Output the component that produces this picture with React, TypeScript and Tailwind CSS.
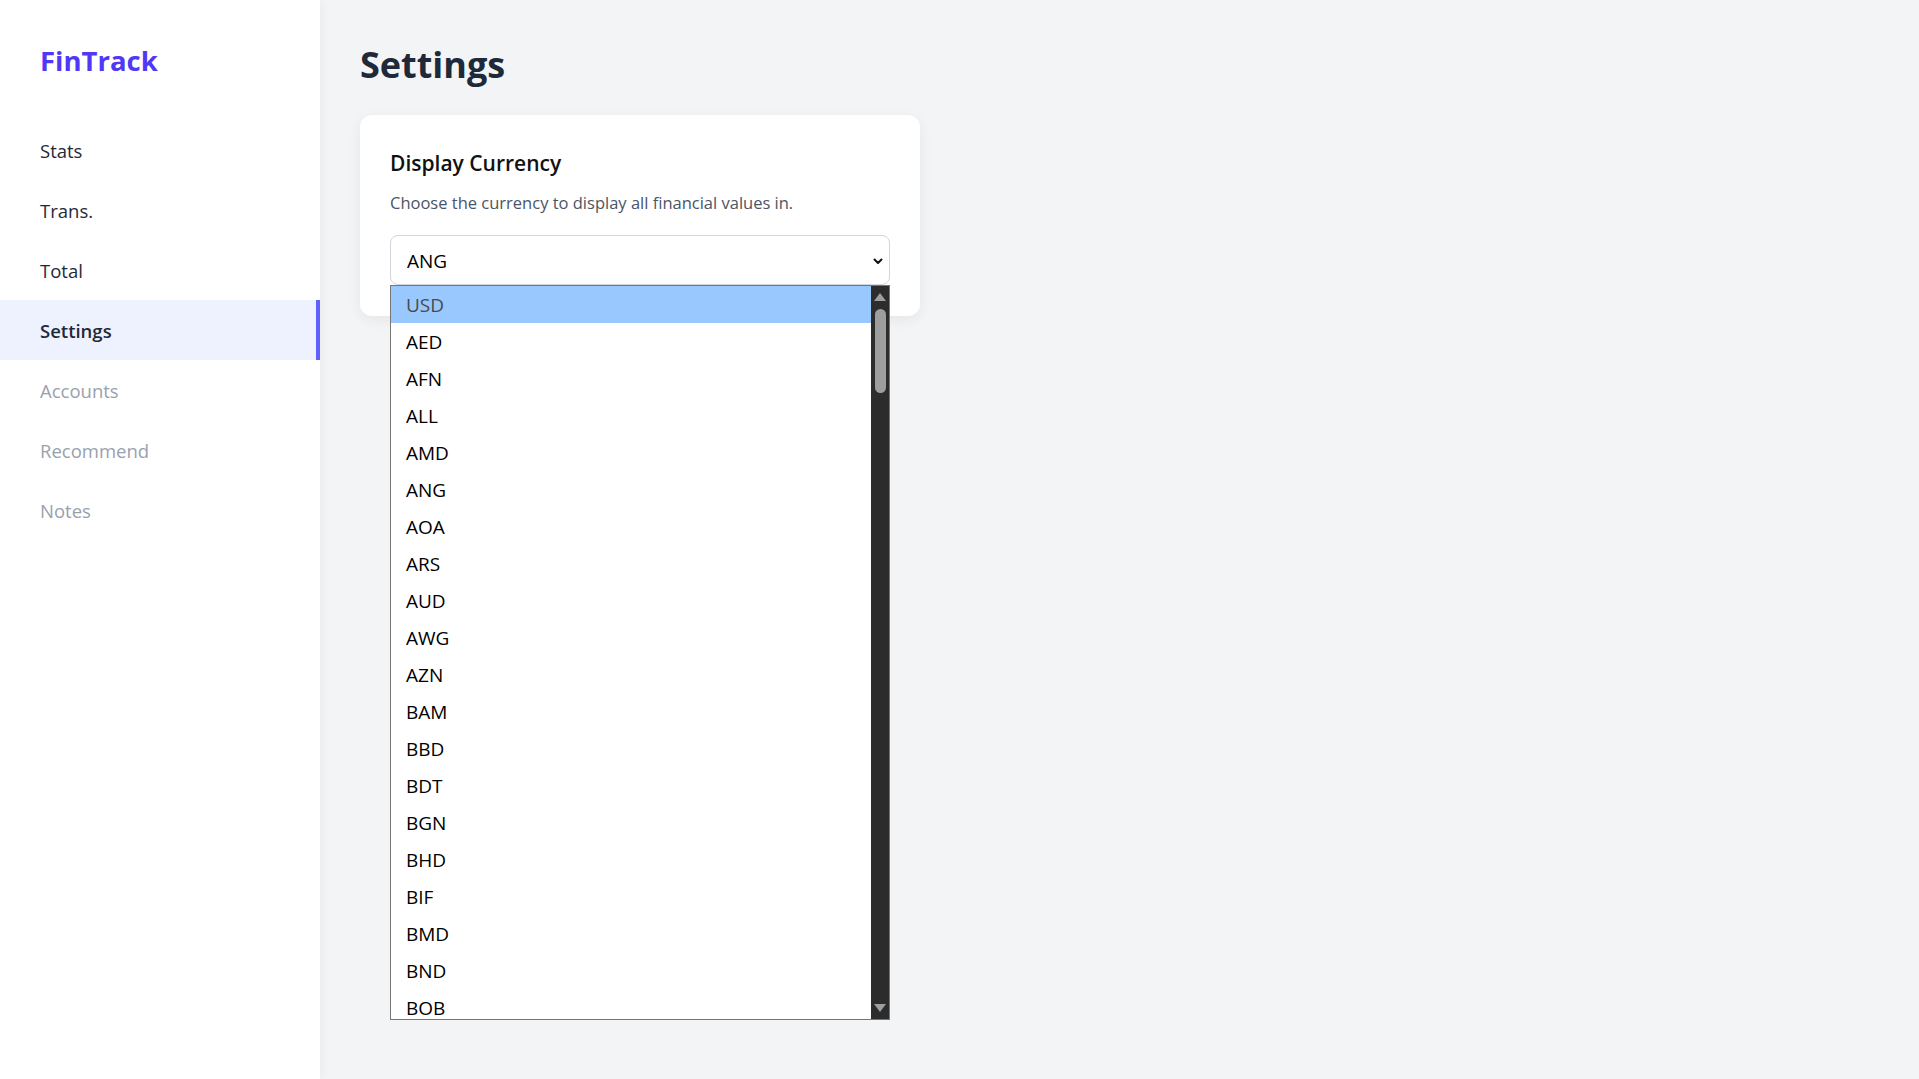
import React from 'react';

const currencies = [
  'USD', 'AED', 'AFN', 'ALL', 'AMD', 'ANG', 'AOA', 'ARS', 'AUD', 'AWG',
  'AZN', 'BAM', 'BBD', 'BDT', 'BGN', 'BHD', 'BIF', 'BMD', 'BND', 'BOB',
];

const navItems = [
  { label: 'Stats', state: 'normal' },
  { label: 'Trans.', state: 'normal' },
  { label: 'Total', state: 'normal' },
  { label: 'Settings', state: 'active' },
  { label: 'Accounts', state: 'muted' },
  { label: 'Recommend', state: 'muted' },
  { label: 'Notes', state: 'muted' },
];

const Sidebar: React.FC = () => (
  <aside className="w-80 shrink-0 bg-white min-h-screen shadow-[2px_0_10px_rgba(0,0,0,0.04)] z-10">
    <div className="h-[120px] flex items-center px-10 pt-[2px]">
      <span className="text-[27.5px] leading-9 font-bold text-indigo-600">FinTrack</span>
    </div>
    <nav>
      {navItems.map((item) => (
        <div
          key={item.label}
          className={
            item.state === 'active'
              ? 'h-[60px] flex items-center px-10 pt-[2px] text-[18.5px] font-semibold text-gray-800 bg-[#eef2ff] border-r-4 border-indigo-500'
              : item.state === 'muted'
              ? 'h-[60px] flex items-center px-10 pt-[2px] text-[18.5px] text-gray-400'
              : 'h-[60px] flex items-center px-10 pt-[2px] text-[18.5px] text-gray-800'
          }
        >
          {item.label}
        </div>
      ))}
    </nav>
  </aside>
);

const CurrencySelect: React.FC = () => (
  <div className="relative mt-5">
    <div className="h-[50px] w-full border border-gray-300 rounded-lg bg-white flex items-center justify-between pl-4 pr-[5px]">
      <span className="text-[19px] text-black pt-[2px]">ANG</span>
      <svg width="12" height="12" viewBox="0 0 12 12" fill="none" className="mt-[1px]">
        <polyline points="2.5,4.5 6,8 9.5,4.5" stroke="#111" strokeWidth="2" strokeLinecap="round" strokeLinejoin="round" />
      </svg>
    </div>
    {/* open dropdown list */}
    <div className="absolute left-0 top-[50px] w-full h-[735px] border border-[#767676] bg-white flex z-20">
      <div className="flex-1 overflow-hidden">
        {currencies.map((c, i) => (
          <div
            key={c}
            className={
              i === 0
                ? 'h-[37px] flex items-center pl-[15px] pt-[2px] text-[19px] bg-[#99c8ff] text-[#4a4a4a]'
                : 'h-[37px] flex items-center pl-[15px] pt-[2px] text-[19px] text-black'
            }
          >
            {c}
          </div>
        ))}
      </div>
      <div className="w-[18px] bg-[#2c2c2c] flex flex-col items-center">
        <svg width="14" height="10" viewBox="0 0 14 10" className="mt-[6px]">
          <polygon points="7,1 13,9 1,9" fill="#9e9e9e" />
        </svg>
        <div className="w-[11px] h-[84px] rounded-full bg-[#9e9e9e] mt-[7px]" />
        <div className="flex-1" />
        <svg width="14" height="10" viewBox="0 0 14 10" className="mb-[6px]">
          <polygon points="1,1 13,1 7,9" fill="#9e9e9e" />
        </svg>
      </div>
    </div>
  </div>
);

export default function App() {
  return (
    <div className="flex min-h-screen bg-[#f3f4f6] font-['Open_Sans',sans-serif] overflow-hidden">
      <Sidebar />
      <main className="flex-1 p-10">
        <h1 className="mt-[5px] text-4xl leading-10 font-bold text-gray-800">Settings</h1>
        <div className="mt-[30px] w-[560px] bg-white rounded-xl shadow-[0_4px_14px_rgba(0,0,0,0.06)] px-[30px] pt-[30px] pb-[31px]">
          <h2 className="text-[21px] leading-9 font-semibold text-[#111]">Display Currency</h2>
          <p className="mt-[10px] text-[16.5px] leading-6 text-gray-600">
            Choose the currency to display all financial values in.
          </p>
          <CurrencySelect />
        </div>
      </main>
    </div>
  );
}
